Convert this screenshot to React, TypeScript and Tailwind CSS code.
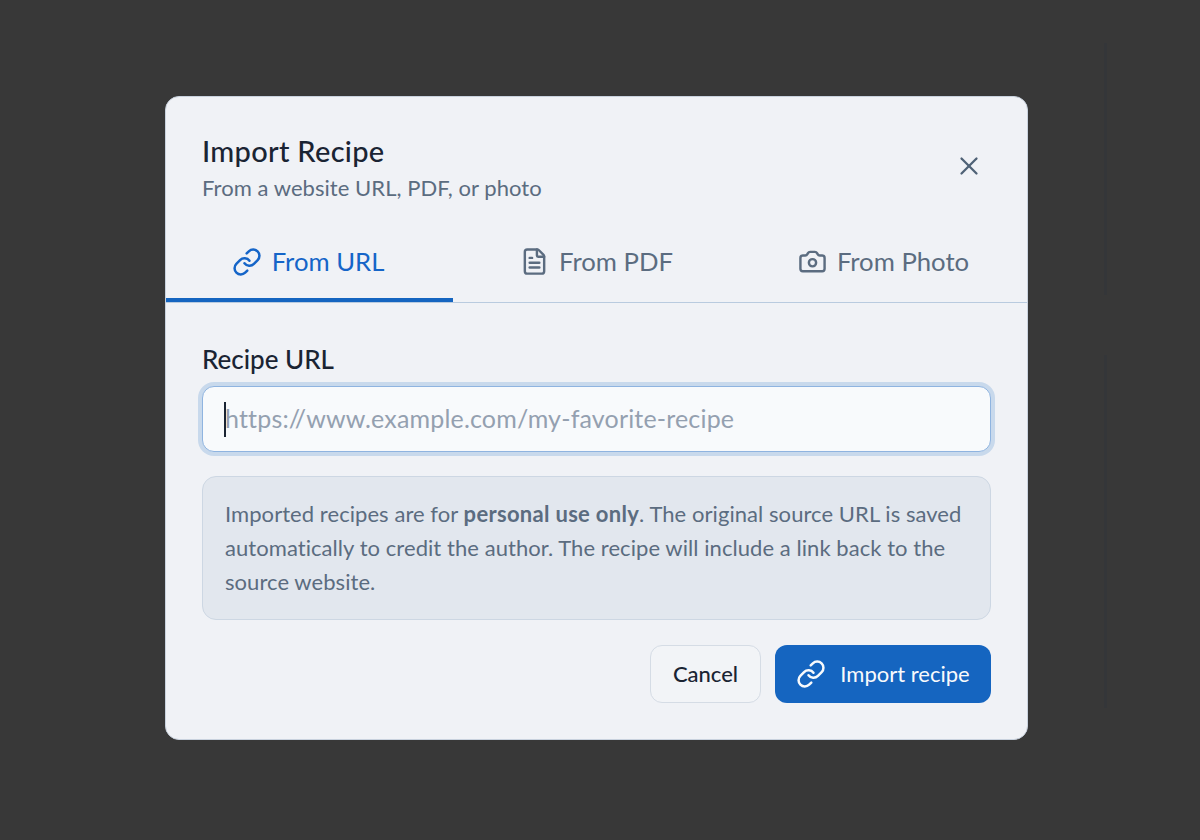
import React from "react";
import { Link, FileText, Camera, X } from "lucide-react";

function Tab({ icon: Icon, label, active, size }: { icon: typeof Link; label: string; active?: boolean; size: number }) {
  return (
    <div
      className={
        "flex h-[80px] items-center justify-center gap-[10px] border-b-[4px] pt-[3px] text-[25.7px] " +
        (active ? "w-[287px] shrink-0 border-[#1565c0] pr-[3px] text-[#1565c8]" : "flex-1 border-transparent text-[#5b6c80]")
      }
    >
      <Icon size={size} strokeWidth={2} />
      <span>{label}</span>
    </div>
  );
}

export default function App() {
  return (
    <div
      className="relative flex h-[840px] w-[1200px] items-start justify-center overflow-hidden bg-[#383838] pt-[96px] pr-[7px]"
      style={{ fontFamily: '"Lato", "Noto Sans", sans-serif' }}
    >
      <div className="absolute left-[1104px] top-[43px] h-[252px] w-[3px] bg-[#343639]" />
      <div className="absolute left-[1104px] top-[355px] h-[353px] w-[3px] bg-[#343639]" />

      <div className="flex h-[644px] w-[863px] flex-col rounded-[14px] border border-[#c9d2de] bg-[#f0f2f6]">
        <div className="flex items-start justify-between pl-[36px] pr-[43px] pt-[36px]">
          <div>
            <h2 className="text-[29px] font-medium leading-[36px] tracking-[0.3px] text-[#1a2433]">Import Recipe</h2>
            <p className="mt-[5px] text-[22px] leading-[28px] tracking-[0.05px] text-[#5b6c80]">From a website URL, PDF, or photo</p>
          </div>
          <X size={30} strokeWidth={1.8} className="mt-[18px] text-[#4f6276]" />
        </div>

        <div className="mt-[20px] flex border-b border-[#b9cbdf]">
          <Tab icon={Link} label="From URL" size={30} active />
          <Tab icon={FileText} label="From PDF" size={29} />
          <Tab icon={Camera} label="From Photo" size={29} />
        </div>

        <div className="flex flex-1 flex-col px-[36px] pt-[40px]">
          <label className="text-[26px] font-medium leading-[32px] text-[#1a2433]">Recipe URL</label>
          <div className="relative mt-[11px]">
            <input
              readOnly
              placeholder="https://www.example.com/my-favorite-recipe"
              className="block h-[66px] w-full rounded-[12px] border border-[#8fb4e0] bg-[#f8fafc] px-[22px] pb-[2px] text-[25px] tracking-[0.17px] text-[#1a2433] shadow-[0_0_0_4px_#c8d9ec] outline-none placeholder:text-[#94a0b0]"
            />
            <span className="absolute left-[22px] top-[16px] h-[35px] w-[2px] bg-[#1a2433]" />
          </div>

          <div className="mt-[24px] rounded-[14px] border border-[#cdd7e3] bg-[#e2e7ee] px-[22px] py-[20px] text-[22px] leading-[34px] tracking-[0.06px] text-[#5b6c80]">
            Imported recipes are for <strong className="font-bold tracking-[0.3px]">personal use only</strong>. The original source URL is saved automatically to credit the author. The recipe will include a link back to the source website.
          </div>

          <div className="mt-[25px] flex justify-end gap-[14px]">
            <button className="h-[58px] w-[111px] rounded-[12px] border border-[#d5dce5] bg-[#f2f4f7] pb-[2px] text-[22px] font-medium text-[#1a2433]">
              Cancel
            </button>
            <button className="flex h-[58px] w-[216px] items-center justify-center gap-[14px] rounded-[12px] bg-[#1565c0] text-[22px] text-[#f8fafc]">
              <Link size={30} strokeWidth={2} />
              <span className="pb-[2px]">Import recipe</span>
            </button>
          </div>
        </div>
      </div>
    </div>
  );
}
